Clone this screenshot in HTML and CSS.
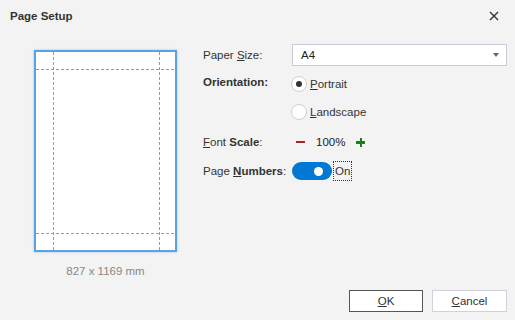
FILE: index.html
```html
<!DOCTYPE html>
<html lang="en">
<head>
  <meta charset="UTF-8">
  <title>Page Setup</title>
  <link rel="stylesheet" href="styles.css">
</head>
<body>

<div class="dialog">
  <div class="header">
    <span class="title">Page Setup</span>
    <svg class="close" width="10" height="10" viewBox="0 0 10 10">
      <path d="M1 1 L9 9 M9 1 L1 9" stroke="#333" stroke-width="1.4" fill="none"/>
    </svg>
  </div>

  <div class="content">
    <div class="preview">
      <div class="page">
        <svg width="139" height="198" viewBox="0 0 139 198">
          <g stroke="#9a9a9a" stroke-width="1" stroke-dasharray="3 2" fill="none">
            <line x1="17.5" y1="0" x2="17.5" y2="198"/>
            <line x1="123.5" y1="0" x2="123.5" y2="198"/>
            <line x1="0" y1="17.5" x2="139" y2="17.5"/>
            <line x1="0" y1="181.5" x2="139" y2="181.5"/>
          </g>
        </svg>
      </div>
      <div class="dims">827 x 1169 mm</div>
    </div>

    <div class="form">
      <div class="row row-size">
        <label class="label">Paper <u>S</u>ize:</label>
        <div class="combo">
          <span>A4</span>
          <span class="arrow"></span>
        </div>
      </div>

      <div class="row row-orient">
        <label class="label strong">Orientation:</label>
        <div class="radios">
          <div class="radio checked"><span class="dot"></span><span><u>P</u>ortrait</span></div>
          <div class="radio"><span class="dot"></span><span><u>L</u>andscape</span></div>
        </div>
      </div>

      <div class="row row-scale">
        <label class="label"><u>F</u>ont <b>Scale</b>:</label>
        <div class="scale">
          <span class="minus"></span>
          <span class="value">100%</span>
          <span class="plus"></span>
        </div>
      </div>

      <div class="row row-numbers">
        <label class="label">Page <b><u>N</u>umbers</b>:</label>
        <div class="toggle-wrap">
          <span class="toggle"><span class="knob"></span></span>
          <span class="toggle-text">On</span>
        </div>
      </div>
    </div>
  </div>

  <div class="footer">
    <button class="btn default"><u>O</u>K</button>
    <button class="btn"><u>C</u>ancel</button>
  </div>
</div>

</body>
</html>
```

FILE: styles.css
```css
body { margin: 0; background: #f3f3f3; font-family: "Liberation Sans", Arial, sans-serif; font-size: 11.5px; color: #333; }
.dialog { width: 515px; height: 320px; display: flex; flex-direction: column; }
.header { height: 31px; display: flex; align-items: center; justify-content: space-between; padding: 0 16px 0 10px; }
.title { font-weight: bold; font-size: 11.5px; color: #333; }
.close { display: block; }

.content { display: flex; height: 259px; }
.preview { margin-left: 34px; margin-top: 19px; width: 143px; display: flex; flex-direction: column; align-items: center; }
.page { width: 139px; height: 198px; border: 2px solid #5aa3df; background: #fff; box-shadow: 0 0 2px rgba(90, 163, 223, 0.6); }
.page svg { display: block; }
.dims { margin-top: 13px; color: #888; }

.form { margin-left: 26px; margin-top: 13px; width: 304px; display: flex; flex-direction: column; }
.row { display: flex; }
.label { width: 89px; color: #333; }
.strong { font-weight: bold; }
.row-size { height: 22px; align-items: center; }
.combo { flex: 1; height: 20px; border: 1px solid #cbc9d6; background: #fff; display: flex; align-items: center; justify-content: space-between; padding: 0 7px 0 8px; color: #222; font-size: 11.5px; }
.arrow { width: 0; height: 0; border-left: 3.5px solid transparent; border-right: 3.5px solid transparent; border-top: 4px solid #666; }

.row-orient { margin-top: 10px; }
.row-orient .label { line-height: 12px; }
.radios { display: flex; flex-direction: column; gap: 12px; }
.radio { display: flex; align-items: center; height: 16px; gap: 3px; margin-left: -1px; }
.radio .dot { width: 14px; height: 14px; border: 1px solid #cfcdd8; border-radius: 50%; background: #fff; display: flex; align-items: center; justify-content: center; }
.radio.checked .dot::after { content: ""; width: 6px; height: 6px; border-radius: 50%; background: #333; }

.row-scale { margin-top: 14px; height: 16px; align-items: center; }
.scale { display: flex; align-items: center; }
.minus { width: 9px; height: 2.5px; background: #a4262c; margin-left: 4px; }
.value { margin-left: 11px; color: #222; }
.plus { position: relative; width: 9px; height: 9px; margin-left: 11px; }
.plus::before, .plus::after { content: ""; position: absolute; background: #1e7e1e; }
.plus::before { left: 0; top: 3.5px; width: 9px; height: 2.5px; }
.plus::after { left: 3.5px; top: 0; width: 2.5px; height: 9px; }

.row-numbers { margin-top: 11px; height: 20px; align-items: center; }
.toggle-wrap { display: flex; align-items: center; }
.toggle { width: 40px; height: 18px; border-radius: 9px; background: #0078d4; display: flex; align-items: center; justify-content: flex-end; padding-right: 9px; box-sizing: border-box; }
.knob { width: 9px; height: 9px; border-radius: 50%; background: #fff; }
.toggle-text { margin-left: 1px; border: 1px dotted #333; height: 18px; line-height: 18px; padding: 0 1px; }

.footer { display: flex; justify-content: flex-end; gap: 9px; padding-right: 8px; }
.btn { width: 75px; height: 22px; background: #fff; border: 1px solid #d2d0dc; font-family: inherit; font-size: 11.5px; color: #333; padding: 0; }
.btn.default { width: 74px; border-color: #555; }
```
